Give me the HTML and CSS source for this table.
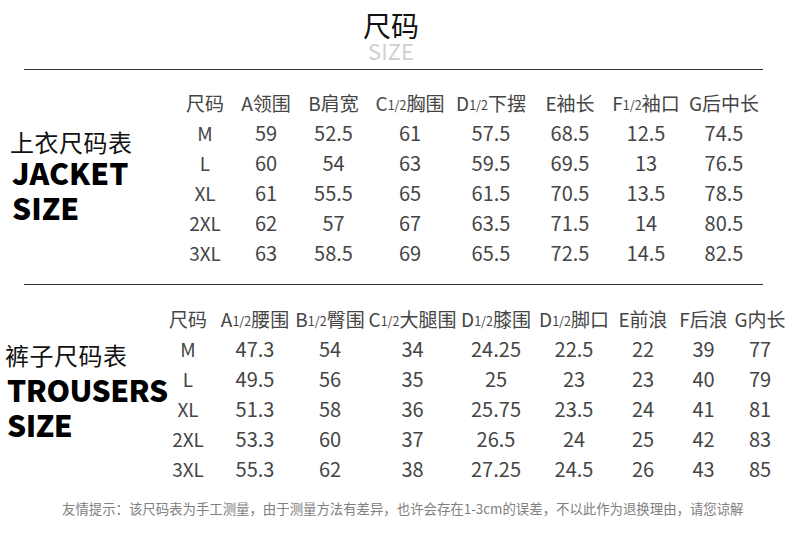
FILE: index.html
```html
<!DOCTYPE html>
<html lang="zh">
<head>
<meta charset="utf-8">
<link rel="stylesheet" href="styles.css">
</head>
<body>
<div class="page">
  <header class="title">
    <div class="title-cn">尺码</div>
    <div class="title-en">SIZE</div>
  </header>
  <div class="rule"></div>

  <section class="block jacket">
    <div class="label">
      <div class="label-cn">上衣尺码表</div>
      <div class="label-en first">JACKET</div>
      <div class="label-en">SIZE</div>
    </div>
    <div class="grid grid-jacket">
      <div class="cell">尺码</div>
      <div class="cell">A领围</div>
      <div class="cell">B肩宽</div>
      <div class="cell">C<span class="half">1/2</span>胸围</div>
      <div class="cell">D<span class="half">1/2</span>下摆</div>
      <div class="cell">E袖长</div>
      <div class="cell">F<span class="half">1/2</span>袖口</div>
      <div class="cell">G后中长</div>

      <div class="cell">M</div><div class="cell num">59</div><div class="cell num">52.5</div><div class="cell num">61</div><div class="cell num">57.5</div><div class="cell num">68.5</div><div class="cell num">12.5</div><div class="cell num">74.5</div>
      <div class="cell">L</div><div class="cell num">60</div><div class="cell num">54</div><div class="cell num">63</div><div class="cell num">59.5</div><div class="cell num">69.5</div><div class="cell num">13</div><div class="cell num">76.5</div>
      <div class="cell">XL</div><div class="cell num">61</div><div class="cell num">55.5</div><div class="cell num">65</div><div class="cell num">61.5</div><div class="cell num">70.5</div><div class="cell num">13.5</div><div class="cell num">78.5</div>
      <div class="cell">2XL</div><div class="cell num">62</div><div class="cell num">57</div><div class="cell num">67</div><div class="cell num">63.5</div><div class="cell num">71.5</div><div class="cell num">14</div><div class="cell num">80.5</div>
      <div class="cell">3XL</div><div class="cell num">63</div><div class="cell num">58.5</div><div class="cell num">69</div><div class="cell num">65.5</div><div class="cell num">72.5</div><div class="cell num">14.5</div><div class="cell num">82.5</div>
    </div>
  </section>
  <div class="rule"></div>

  <section class="block trousers">
    <div class="label">
      <div class="label-cn">裤子尺码表</div>
      <div class="label-en first">TROUSERS</div>
      <div class="label-en">SIZE</div>
    </div>
    <div class="grid grid-trousers">
      <div class="cell">尺码</div>
      <div class="cell">A<span class="half">1/2</span>腰围</div>
      <div class="cell">B<span class="half">1/2</span>臀围</div>
      <div class="cell">C<span class="half">1/2</span>大腿围</div>
      <div class="cell">D<span class="half">1/2</span>膝围</div>
      <div class="cell">D<span class="half">1/2</span>脚口</div>
      <div class="cell">E前浪</div>
      <div class="cell">F后浪</div>
      <div class="cell">G内长</div>

      <div class="cell">M</div><div class="cell num">47.3</div><div class="cell num">54</div><div class="cell num">34</div><div class="cell num">24.25</div><div class="cell num">22.5</div><div class="cell num">22</div><div class="cell num">39</div><div class="cell num">77</div>
      <div class="cell">L</div><div class="cell num">49.5</div><div class="cell num">56</div><div class="cell num">35</div><div class="cell num">25</div><div class="cell num">23</div><div class="cell num">23</div><div class="cell num">40</div><div class="cell num">79</div>
      <div class="cell">XL</div><div class="cell num">51.3</div><div class="cell num">58</div><div class="cell num">36</div><div class="cell num">25.75</div><div class="cell num">23.5</div><div class="cell num">24</div><div class="cell num">41</div><div class="cell num">81</div>
      <div class="cell">2XL</div><div class="cell num">53.3</div><div class="cell num">60</div><div class="cell num">37</div><div class="cell num">26.5</div><div class="cell num">24</div><div class="cell num">25</div><div class="cell num">42</div><div class="cell num">83</div>
      <div class="cell">3XL</div><div class="cell num">55.3</div><div class="cell num">62</div><div class="cell num">38</div><div class="cell num">27.25</div><div class="cell num">24.5</div><div class="cell num">26</div><div class="cell num">43</div><div class="cell num">85</div>
    </div>
  </section>

  <footer class="note">友情提示：该尺码表为手工测量，由于测量方法有差异，也许会存在1-3cm的误差，不以此作为退换理由，请您谅解</footer>
</div>
</body>
</html>
```

FILE: styles.css
```css
* { box-sizing: border-box; }
html, body { margin: 0; padding: 0; background: #fff; }
body {
  font-family: "Noto Sans CJK SC", "Noto Sans", sans-serif;
  color: #333;
}
.page { width: 790px; height: 541px; overflow: hidden; }

.title {
  padding-top: 10px;
  padding-right: 8px;
  text-align: center;
}
.title-cn {
  font-size: 28px;
  line-height: 30px;
  color: #111;
  font-weight: 400;
}
.title-en {
  font-size: 22px;
  line-height: 20px;
  color: #cfcfcf;
  font-weight: 400;
}

.rule {
  height: 1px;
  background: #333;
  margin: 0 27px 0 24px;
}
.title + .rule { margin-top: 9px; }

.block { display: flex; }
.jacket { padding: 17px 0; }
.trousers { padding: 18px 0 0; }

.label { white-space: nowrap; }
.jacket .label { width: 175px; padding: 42px 0 0 10px; }
.trousers .label { width: 156px; padding: 39px 0 0 5px; }

.label-cn {
  font-size: 24px;
  line-height: 26px;
  color: #111;
  letter-spacing: 0.5px;
}
.label-en {
  font-size: 30px;
  line-height: 36px;
  font-weight: 900;
  color: #000;
  letter-spacing: 0;
  margin-left: 2px;
}
.trousers .label-en { letter-spacing: -0.5px; }
.jacket .label-en.first { line-height: 34px; }
.trousers .label-en.first { margin-top: 4px; line-height: 34px; }

.grid {
  display: grid;
  grid-auto-rows: 30px;
}
.grid-jacket { grid-template-columns: 60px 62px 73px 80px 82px 76px 76px 80px; }
.grid-trousers { grid-template-columns: 64px 70px 80px 85px 82px 74px 64px 57px 56px; }

.cell {
  display: flex;
  justify-content: center;
  align-items: center;
  white-space: nowrap;
  font-size: 19px;
  font-weight: 400;
  color: #454545;
}
.cell.num { font-size: 20px; }
.half {
  font-size: 12.5px;
  padding-top: 5px;
}

.note {
  margin-top: 15px;
  padding-left: 62px;
  font-size: 13.4px;
  line-height: 20px;
  color: #808080;
  font-weight: 400;
  white-space: nowrap;
}
```
